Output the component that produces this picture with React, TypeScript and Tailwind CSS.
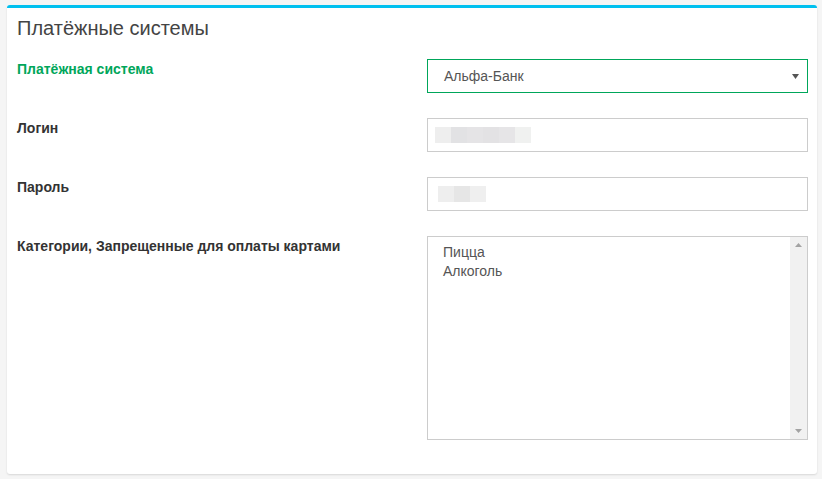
import React from "react";

const font = { fontFamily: '"Liberation Sans", Arial, sans-serif' };

function Blocks({ colors }: { colors: string[] }) {
  return (
    <div className="flex h-[16px]">
      {colors.map((c, i) => (
        <div key={i} className="w-[16px] h-[16px]" style={{ backgroundColor: c }} />
      ))}
    </div>
  );
}

export default function App() {
  return (
    <div className="w-[822px] h-[479px] bg-[#f5f5f5] pt-[5px] pl-[7px] pr-[5px]" style={font}>
      <div className="h-[469px] bg-white rounded-[3px] border-t-[3px] border-[#00c0ef] shadow-[0_1px_2px_rgba(0,0,0,0.12)] pl-[10px] pr-[9px]">
        <div className="pt-[10px] h-[29px]">
          <h3 className="text-[20px] leading-[20px] text-[#444] font-normal">Платёжные системы</h3>
        </div>
        <div className="mt-[22px] flex flex-col gap-[25px]">
          <div className="flex">
            <label className="w-[410px] text-[14px] leading-[20px] font-bold text-[#00a65a]">Платёжная система</label>
            <div className="w-[381px] h-[34px] border border-[#00a65a] flex items-center justify-between pl-[16px] pr-[8px] text-[14px] text-[#555]">
              <span>Альфа-Банк</span>
              <svg width="7" height="5" viewBox="0 0 7 5"><path d="M0 0 H7 L3.5 5 Z" fill="#555" /></svg>
            </div>
          </div>
          <div className="flex">
            <label className="w-[410px] text-[14px] leading-[20px] font-bold text-[#333]">Логин</label>
            <div className="w-[381px] h-[34px] border border-[#ccc] flex items-center pl-[7px]">
              <Blocks colors={["#eeeeee", "#e2e2e4", "#e5e4e6", "#e3e2e4", "#e6e5e7", "#f0f1f0"]} />
            </div>
          </div>
          <div className="flex">
            <label className="w-[410px] text-[14px] leading-[20px] font-bold text-[#333]">Пароль</label>
            <div className="w-[381px] h-[34px] border border-[#ccc] flex items-center pl-[10px]">
              <Blocks colors={["#eeeeee", "#e6e6e6", "#efefef"]} />
            </div>
          </div>
          <div className="flex">
            <label className="w-[410px] text-[14px] leading-[20px] font-bold text-[#333]">Категории, Запрещенные для оплаты картами</label>
            <div className="w-[381px] h-[204px] border border-[#ccc] flex">
              <div className="flex-1 pl-[15px] pt-[6px] text-[14px] leading-[19px] text-[#555]">
                <div>Пицца</div>
                <div>Алкоголь</div>
              </div>
              <div className="w-[17px] h-full bg-[#f1f1f1] flex flex-col items-center justify-between py-[6px]">
                <svg width="7" height="4" viewBox="0 0 7 4"><path d="M0 4 H7 L3.5 0 Z" fill="#a3a3a3" /></svg>
                <svg width="7" height="4" viewBox="0 0 7 4"><path d="M0 0 H7 L3.5 4 Z" fill="#a3a3a3" /></svg>
              </div>
            </div>
          </div>
        </div>
      </div>
    </div>
  );
}
